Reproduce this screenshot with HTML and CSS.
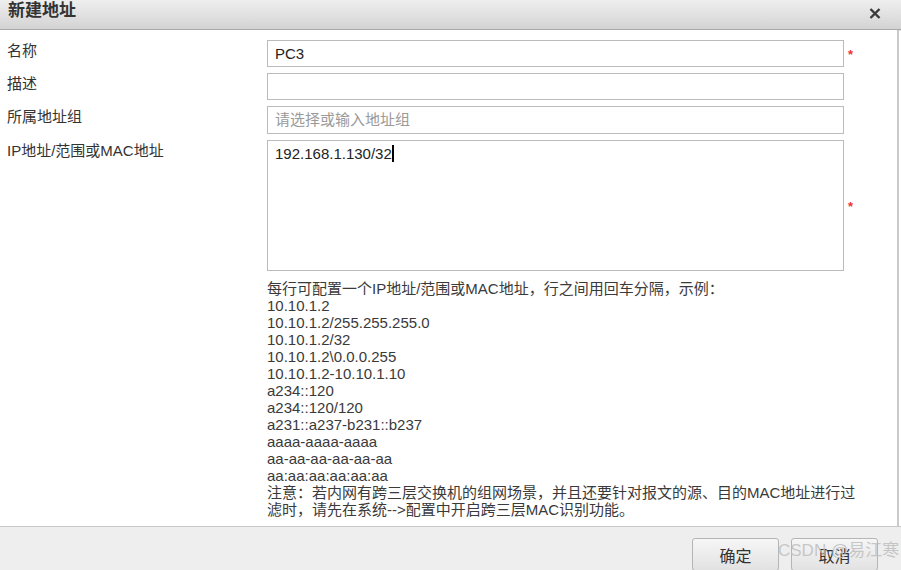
FILE: index.html
```html
<!DOCTYPE html>
<html lang="zh-CN">
<head>
<meta charset="utf-8">
<title>新建地址</title>
<link rel="stylesheet" href="styles.css">
</head>
<body>
<div class="dialog">
  <div class="titlebar">
    <span class="title">新建地址</span>
    <span class="close" aria-label="关闭">
      <svg width="12" height="11" viewBox="0 0 12 11"><path d="M1.5 1 L10.5 10 M10.5 1 L1.5 10" stroke="#3a3a3a" stroke-width="2.4" stroke-linecap="butt"/></svg>
    </span>
  </div>
  <div class="content">
    <div class="row">
      <div class="lbl">名称</div>
      <div class="input">PC3</div>
      <span class="req">*</span>
    </div>
    <div class="row">
      <div class="lbl">描述</div>
      <div class="input"></div>
      <span class="req"></span>
    </div>
    <div class="row">
      <div class="lbl">所属地址组</div>
      <div class="input input-tall placeholder">请选择或输入地址组</div>
      <span class="req"></span>
    </div>
    <div class="row">
      <div class="lbl">IP地址/范围或MAC地址</div>
      <div class="input textarea">192.168.1.130/32<span class="caret"></span></div>
      <span class="req">*</span>
    </div>
    <div class="help">
      <div>每行可配置一个IP地址/范围或MAC地址，行之间用回车分隔，示例：</div>
      <div>10.10.1.2</div>
      <div>10.10.1.2/255.255.255.0</div>
      <div>10.10.1.2/32</div>
      <div>10.10.1.2\0.0.0.255</div>
      <div>10.10.1.2-10.10.1.10</div>
      <div>a234::120</div>
      <div>a234::120/120</div>
      <div>a231::a237-b231::b237</div>
      <div>aaaa-aaaa-aaaa</div>
      <div>aa-aa-aa-aa-aa-aa</div>
      <div>aa:aa:aa:aa:aa:aa</div>
      <div class="note">注意：若内网有跨三层交换机的组网场景，并且还要针对报文的源、目的MAC地址进行过滤时，请先在系统--&gt;配置中开启跨三层MAC识别功能。</div>
    </div>
  </div>
  <div class="footer">
    <button class="btn">确定</button>
    <button class="btn">取消</button>
    <span class="watermark">CSDN @易江寒</span>
  </div>
</div>
</body>
</html>
```

FILE: styles.css
```css
html, body {
  margin: 0;
  padding: 0;
  background: #ffffff;
}
body {
  width: 901px;
  height: 570px;
  overflow: hidden;
  font-family: "Liberation Sans", Arial, "Noto Sans CJK SC", sans-serif;
  color: #333333;
}
.dialog {
  position: relative;
  width: 901px;
  height: 570px;
  display: flex;
  flex-direction: column;
}
.titlebar {
  height: 30px;
  flex: none;
  display: flex;
  justify-content: space-between;
  align-items: flex-start;
  padding: 2px 0 0 8px;
  box-sizing: border-box;
  background: linear-gradient(#efefef, #d3d3d3);
  border-bottom: 1px solid #a9a9a9;
  box-shadow: 0 1px 0 #dedede;
}
.title {
  font-size: 17px;
  line-height: 18px;
  font-weight: bold;
  color: #333333;
}
.close {
  margin: 6px 20px 0 0;
  display: flex;
}
.content {
  flex: none;
  height: 496px;
  width: 899px;
  box-sizing: border-box;
  padding: 10px 0 0 7px;
  border-right: 2px solid #cacaca;
  background: #ffffff;
}
.row {
  display: flex;
  align-items: center;
  margin-bottom: 6px;
}
.lbl {
  align-self: flex-start;
  width: 260px;
  flex: none;
  padding-top: 2px;
  font-size: 15px;
  line-height: 18px;
  color: #333333;
}
.input {
  width: 577px;
  height: 27px;
  flex: none;
  box-sizing: border-box;
  border: 1px solid #bbbbbb;
  padding: 0 7px;
  font-size: 15px;
  line-height: 26px;
  color: #222222;
}
.input-tall {
  height: 28px;
}
.placeholder {
  color: #9a9a9a;
}
.textarea {
  height: 131px;
  padding-top: 4px;
  line-height: 18px;
}
.caret {
  display: inline-block;
  width: 2px;
  height: 17px;
  background: #000000;
  vertical-align: -3px;
}
.req {
  width: 10px;
  margin-left: 4px;
  color: #ee3333;
  font-size: 13px;
  line-height: 10px;
  height: 8px;
  font-weight: bold;
}
.help {
  margin: 9px 0 0 260px;
  width: 596px;
  font-size: 15px;
  line-height: 17px;
  color: #3a3a3a;
}
.footer {
  position: relative;
  flex: 1;
  display: flex;
  justify-content: flex-end;
  align-items: flex-start;
  gap: 12px;
  padding: 11px 23px 0 0;
  background: #eeeeee;
  border-top: 1px solid #c8c8c8;
}
.btn {
  width: 87px;
  height: 33px;
  flex: none;
  border: 1px solid #b5b5b5;
  border-radius: 3px;
  background: linear-gradient(#f6f6f6, #e2e2e2);
  font-family: "Liberation Sans", Arial, "Noto Sans CJK SC", sans-serif;
  font-size: 16px;
  color: #333333;
  padding: 0;
}
.watermark {
  position: absolute;
  left: 778px;
  top: 14px;
  font-size: 17px;
  line-height: 20px;
  color: rgba(190, 190, 190, 0.85);
  white-space: nowrap;
  pointer-events: none;
}
```
